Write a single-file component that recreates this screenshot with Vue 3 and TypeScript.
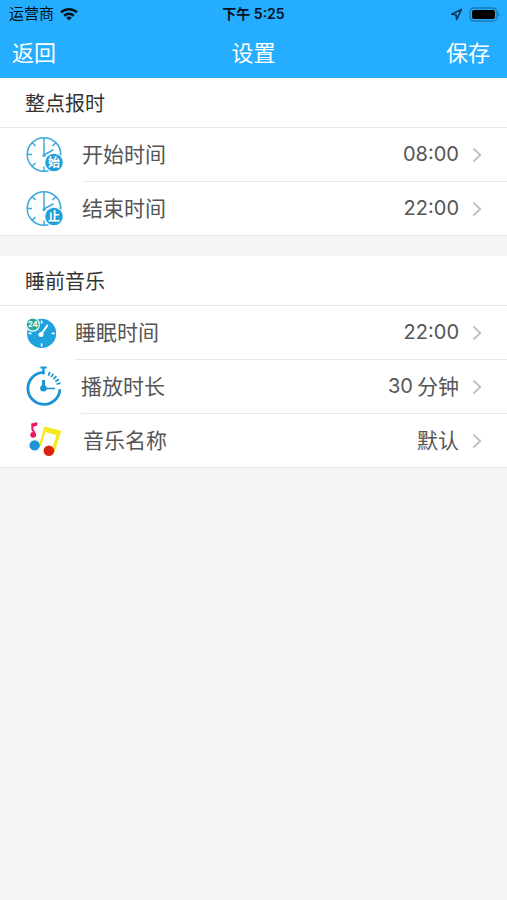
<script setup lang="ts">
import { ref } from 'vue'

type IconKind = 'start' | 'end' | 'sleep' | 'duration' | 'music'

interface SettingRow {
  icon: IconKind
  label: string
  amount?: string
  text?: string
}

interface SettingGroup {
  title: string
  rows: SettingRow[]
}

const groups = ref<SettingGroup[]>([
  {
    title: '整点报时',
    rows: [
      { icon: 'start', label: '开始时间', amount: '08:00' },
      { icon: 'end', label: '结束时间', amount: '22:00' },
    ],
  },
  {
    title: '睡前音乐',
    rows: [
      { icon: 'sleep', label: '睡眠时间', amount: '22:00' },
      { icon: 'duration', label: '播放时长', amount: '30', text: '分钟' },
      { icon: 'music', label: '音乐名称', text: '默认' },
    ],
  },
])

const dialAngles = [0, 45, 90, 180, 225, 270, 315]
const quarterAngles = [90, 180, 270]
const dashAngles = [20, 33, 46, 59, 72]
</script>

<template>
  <div class="screen">
    <header class="header">
      <div class="status">
        <div class="carrier">
          <span>运营商</span>
          <svg class="wifi" width="18" height="14" viewBox="0 0 18 14" aria-hidden="true">
            <g fill="none" stroke="#04121c" stroke-width="2.6">
              <path d="M1 5.4a11.6 11.6 0 0 1 16 0" />
              <path d="M4.2 8.7a7 7 0 0 1 9.6 0" />
            </g>
            <path d="M9 13.6 6.2 10.8a4 4 0 0 1 5.6 0z" fill="#04121c" />
          </svg>
        </div>
        <span class="clock">下午 5:25</span>
        <div class="indicators">
          <svg width="13" height="13" viewBox="0 0 13 13" aria-hidden="true">
            <path d="M11.4 1.4 1.6 6.3l4.5.5.6 4.6z" fill="none" stroke="#083a5c" stroke-width="1.6" stroke-linejoin="round" />
          </svg>
          <svg width="31" height="15" viewBox="0 0 31 15" aria-hidden="true">
            <rect x="1" y="1" width="27" height="13" rx="4" fill="none" stroke="#1878b4" stroke-width="1.3" />
            <rect x="3" y="3" width="23" height="9" rx="2" fill="#000" />
            <path d="M29.2 5.2v4.6c1.6-.7 1.6-3.9 0-4.6z" fill="#1878b4" />
          </svg>
        </div>
      </div>
      <nav class="nav">
        <button type="button" class="nav-button">返回</button>
        <h1 class="title">设置</h1>
        <button type="button" class="nav-button save">保存</button>
      </nav>
    </header>

    <main class="groups">
      <section v-for="group in groups" :key="group.title" class="group">
        <h2 class="group-title">{{ group.title }}</h2>
        <button v-for="row in group.rows" :key="row.label" type="button" class="row">
          <span class="icon" :class="row.icon">
            <svg v-if="row.icon === 'start' || row.icon === 'end'" width="38" height="38" viewBox="0 0 38 38" aria-hidden="true">
              <g fill="none" stroke="#38aade" stroke-width="1.5">
                <circle cx="18" cy="18.5" r="16.8" />
                <path v-for="a in dialAngles" :key="a" d="M18 2v4.4" :transform="`rotate(${a} 18 18.5)`" />
                <path d="M18 7v12l9-5" stroke-linecap="round" />
              </g>
              <circle cx="18" cy="19.5" r="1.6" fill="#38aade" />
              <circle cx="28" cy="26.5" r="10" fill="#fff" />
              <circle cx="28" cy="26.5" r="8.8" fill="#21a0da" />
              <text class="badge" x="28" y="31" text-anchor="middle">{{ row.icon === 'start' ? '始' : '止' }}</text>
            </svg>

            <svg v-else-if="row.icon === 'sleep'" width="31" height="32" viewBox="0 0 31 32" aria-hidden="true">
              <circle cx="15.6" cy="16.4" r="14.6" fill="#20a2df" />
              <g stroke="#fff" stroke-width="1.6">
                <path v-for="a in quarterAngles" :key="a" d="M15.6 3.2v3.2" :transform="`rotate(${a} 15.6 16.4)`" />
                <path d="M15.6 3.6v3" />
                <path d="M15 17.5 21.2 8.6" stroke-width="2" stroke-linecap="round" />
              </g>
              <circle cx="15" cy="17.4" r="2.5" fill="#fff" />
              <circle cx="6.8" cy="7.6" r="7.2" fill="#fff" />
              <circle cx="6.8" cy="7.6" r="6" fill="#28aa98" />
              <text class="hours" x="6.8" y="10.4" text-anchor="middle">24</text>
            </svg>

            <svg v-else-if="row.icon === 'duration'" width="37" height="42" viewBox="0 0 37 42" aria-hidden="true">
              <g fill="none" stroke="#1b93d4">
                <path d="M17.5 6.4a16 16 0 1 0 16.4 16.8" stroke-width="2.8" />
                <path d="M17.5 2v6.5" stroke-width="2.4" />
                <path d="M14.4 1.5h6.2" stroke-width="2" />
                <path d="M17.5 14v9" stroke-width="3" />
                <path d="M17.5 22.5H29" stroke-width="1.6" />
                <path v-for="a in dashAngles" :key="a" d="M17.8 4.8v4.2" stroke-width="1.7" :transform="`rotate(${a} 17.8 22.4)`" />
              </g>
              <circle cx="17.5" cy="22.3" r="3.3" fill="#1b93d4" />
            </svg>

            <svg v-else width="39" height="38" viewBox="0 0 39 38" aria-hidden="true">
              <path d="M14 24 19.3 6.2" fill="none" stroke="#f5ea20" stroke-width="2.4" />
              <path d="M33 10 27 30" fill="none" stroke="#f5ea20" stroke-width="3.4" />
              <path d="M18.5 4.6 35.2 8.8l-1.6 5.2-16.6-4.6z" fill="#f5ea20" />
              <circle cx="8.6" cy="23.4" r="5.2" fill="#1c94d8" />
              <circle cx="22.9" cy="28.8" r="5.3" fill="#d9220f" />
              <path d="M9 12.4 6.3 7V2.4l4.8-1.2" fill="none" stroke="#e91763" stroke-width="2" />
              <path d="M5.4 2.2 11.2.6v2.8L6.6 5z" fill="#e91763" />
              <circle cx="7.2" cy="12.8" r="2.9" fill="#e91763" />
            </svg>
          </span>
          <span class="body">
            <span class="label">{{ row.label }}</span>
            <span class="value">
              <span v-if="row.amount" class="amount">{{ row.amount }}</span>
              <span v-if="row.text">{{ row.text }}</span>
            </span>
            <svg class="chevron" width="10" height="16" viewBox="0 0 10 16" aria-hidden="true">
              <path d="M1.4 1.6 8.2 8l-6.8 6.4" fill="none" stroke="#c2c2c4" stroke-width="2" />
            </svg>
          </span>
        </button>
      </section>
    </main>
  </div>
</template>

<style>
body {
  background: #f4f4f4;
}
</style>

<style scoped>
.screen {
  min-height: 100vh;
  background: #f4f4f4;
  font-family: Inter, "Noto Sans CJK SC", sans-serif;
  color: #555;
}

button {
  margin: 0;
  border: 0;
  padding: 0;
  background: none;
  font: inherit;
  color: inherit;
  text-align: left;
  cursor: pointer;
}

.header {
  background: #25adff;
}

.status {
  display: grid;
  grid-template-columns: 1fr auto 1fr;
  align-items: center;
  height: 28px;
  padding: 0 7px;
  font-size: 15px;
  line-height: 28px;
  color: #04121c;
}

.carrier {
  display: flex;
  align-items: center;
  gap: 6px;
  padding-left: 2px;
}

.clock {
  font-size: 14px;
  font-weight: 600;
}

.indicators {
  display: flex;
  align-items: center;
  justify-content: flex-end;
  gap: 6px;
}

.nav {
  display: grid;
  grid-template-columns: 1fr auto 1fr;
  align-items: center;
  height: 50px;
  padding: 0 12px;
  font-size: 22px;
  line-height: 50px;
  color: #fff;
}

.title {
  margin: 0;
  font-size: 22px;
  font-weight: 400;
}

.save {
  padding-right: 5px;
  text-align: right;
}

.groups {
  display: flex;
  flex-direction: column;
  gap: 20px;
}

.group {
  background: #fff;
  border-bottom: 1px solid #e4e4e4;
}

.group-title {
  margin: 0;
  padding: 4px 25px 0;
  border-bottom: 1px solid #e8e8e8;
  font-size: 20px;
  line-height: 45px;
  font-weight: 400;
  color: #333;
}

.row {
  display: flex;
  align-items: center;
  gap: 18px;
  width: 100%;
  height: 54px;
  padding-left: 26px;
}

.icon {
  display: flex;
  flex: none;
}

.body {
  display: flex;
  flex: 1;
  align-items: center;
  height: 54px;
  box-sizing: border-box;
  padding-right: 25px;
  border-bottom: 1px solid #e8e8e8;
  font-size: 21px;
  line-height: 53px;
}

.row:last-child,
.row:last-child .body {
  height: 53px;
}

.row:last-child .body {
  border-bottom: 0;
}

.value {
  display: flex;
  align-items: center;
  gap: 4px;
  margin-left: auto;
}

.amount {
  font-size: 20px;
}

.chevron {
  flex: none;
  margin-left: 13px;
}

.badge {
  font-size: 12px;
  font-weight: 700;
  fill: #fff;
}

.hours {
  font-size: 8px;
  font-weight: 700;
  fill: #fff;
}
</style>
